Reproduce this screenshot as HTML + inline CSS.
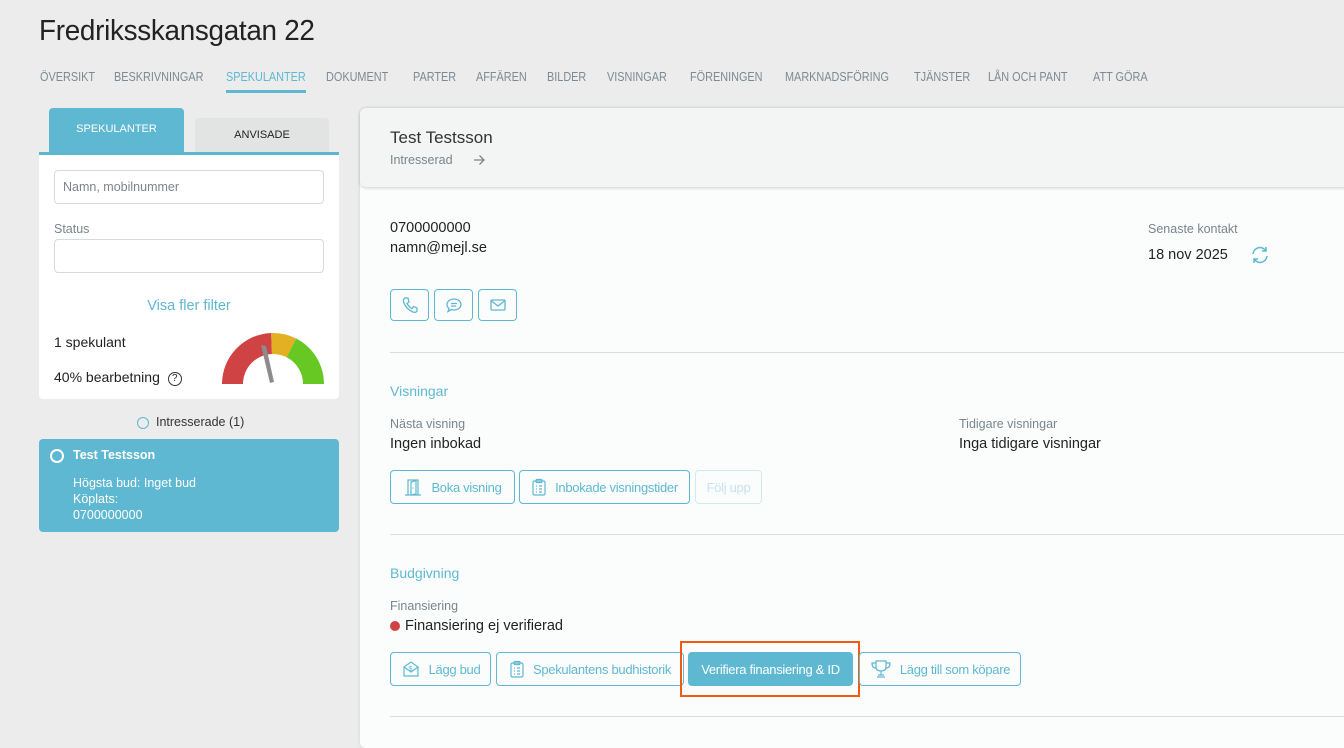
<!DOCTYPE html>
<html><head><meta charset="utf-8"><style>
*{margin:0;padding:0;box-sizing:border-box}
body{width:1344px;height:729px;overflow:hidden;background:#ececec;font-family:"Liberation Sans",sans-serif;position:relative;color:#222}
.a{position:absolute;white-space:nowrap}
.nav{top:70px;font-size:12.5px;color:#7d8a92;transform:scaleX(0.87);transform-origin:left top}
.btn{position:absolute;border:1px solid #5fb8d1;border-radius:4px;background:#fbfdfd;color:#5fb8d1;font-size:13px;display:flex;align-items:center;justify-content:center;gap:8px;letter-spacing:-0.3px}
.btn svg{flex:none}
.lbl{font-size:12.5px;color:#7a858c}
.val{font-size:14.5px;color:#222}
.hr{position:absolute;left:390px;right:0;height:1px;background:#dcdede}
</style></head><body>
<div class="a" style="left:39px;top:15px;font-size:29px;color:#222;letter-spacing:-0.3px;transform:scaleX(0.96);transform-origin:left top">Fredriksskansgatan 22</div>
<div class="a nav" style="left:40px">ÖVERSIKT</div>
<div class="a nav" style="left:114px">BESKRIVNINGAR</div>
<div class="a nav" style="left:226px;color:#5fb8d1">SPEKULANTER</div>
<div class="a" style="left:226px;top:90px;width:80px;height:3px;background:#5fb8d1"></div>
<div class="a nav" style="left:326px">DOKUMENT</div>
<div class="a nav" style="left:413px">PARTER</div>
<div class="a nav" style="left:476px">AFFÄREN</div>
<div class="a nav" style="left:547px">BILDER</div>
<div class="a nav" style="left:607px">VISNINGAR</div>
<div class="a nav" style="left:690px">FÖRENINGEN</div>
<div class="a nav" style="left:785px">MARKNADSFÖRING</div>
<div class="a nav" style="left:914px">TJÄNSTER</div>
<div class="a nav" style="left:988px">LÅN OCH PANT</div>
<div class="a nav" style="left:1093px">ATT GÖRA</div>

<!-- left panel -->
<div class="a" style="left:49px;top:108px;width:135px;height:46px;background:#5fb8d1;border-radius:4px 4px 0 0;color:#fff;font-size:11px;text-align:center;padding-top:15px">SPEKULANTER</div>
<div class="a" style="left:195px;top:118px;width:134px;height:36px;background:#e2e4e4;border-radius:4px 4px 0 0;color:#222;font-size:11px;text-align:center;padding-top:11px">ANVISADE</div>
<div class="a" style="left:39px;top:152px;width:300px;height:3px;background:#5fb8d1"></div>
<div class="a" style="left:39px;top:155px;width:300px;height:244px;background:#fff;border-radius:0 0 4px 4px"></div>
<div class="a" style="left:54px;top:170px;width:270px;height:34px;border:1px solid #d8dada;border-radius:4px;font-size:12.5px;color:#7a858c;padding:9px 8px">Namn, mobilnummer</div>
<div class="a lbl" style="left:54px;top:222px">Status</div>
<div class="a" style="left:54px;top:239px;width:270px;height:34px;border:1px solid #d8dada;border-radius:4px"></div>
<div class="a" style="left:39px;top:298px;width:300px;text-align:center;font-size:14.5px;color:#5fb8d1">Visa fler filter</div>
<div class="a val" style="left:54px;top:334px;font-size:14px">1 spekulant</div>
<div class="a val" style="left:54px;top:369px;font-size:14px">40% bearbetning <span style="display:inline-block;width:14px;height:14px;border:1.3px solid #333;border-radius:50%;font-size:10px;text-align:center;line-height:12px;margin-left:4px;vertical-align:1px">?</span></div>
<svg class="a" style="left:0;top:0" width="340" height="400">
<path d="M222,384 A51,51 0 0 1 271.2,333.05 L271.95,354.03 A30,30 0 0 0 243,384 Z" fill="#d04345"/>
<path d="M271.2,333.05 A51,51 0 0 1 296.15,338.56 L286.62,357.27 A30,30 0 0 0 271.95,354.03 Z" fill="#e2b022"/>
<path d="M296.15,338.56 A51,51 0 0 1 324,384 L303,384 A30,30 0 0 0 286.62,357.27 Z" fill="#68c823"/>
<path d="M261,345 L266,346 L274,382 L270,383 Z" fill="#8c8c8c"/>
</svg>
<div class="a" style="left:137px;top:417px;width:12px;height:12px;border:1.3px solid #5fb8d1;border-radius:50%"></div>
<div class="a" style="left:156px;top:415px;font-size:12.5px;color:#333">Intresserade (1)</div>
<div class="a" style="left:39px;top:439px;width:300px;height:93px;background:#5fb8d1;border-radius:4px;color:#fff;font-size:12.5px">
<div class="a" style="left:11px;top:10px;width:14px;height:14px;border:2px solid #fff;border-radius:50%"></div>
<div class="a" style="left:34px;top:9px;font-weight:bold">Test Testsson</div>
<div class="a" style="left:34px;top:36px;line-height:16px">Högsta bud: Inget bud<br>Köplats:<br>0700000000</div>
</div>

<!-- main -->
<div class="a" style="left:360px;top:108px;width:1000px;height:640px;background:#fbfdfd;border-radius:6px;box-shadow:0 0 3px rgba(0,0,0,.12)"></div>
<div class="a" style="left:360px;top:108px;width:1000px;height:79px;background:#f3f4f4;border-radius:6px 0 6px 6px;box-shadow:0 1px 3px rgba(0,0,0,.18)"></div>
<div class="a" style="left:390px;top:128px;font-size:17px;color:#333">Test Testsson</div>
<div class="a lbl" style="left:390px;top:153px">Intresserad</div>
<svg class="a" style="left:472px;top:153px" width="14" height="14"><path d="M2 7H12M7.5 2.5L12 7L7.5 11.5" stroke="#7a858c" stroke-width="1.3" fill="none"/></svg>
<div class="a val" style="left:390px;top:220px">0700000000</div>
<div class="a val" style="left:390px;top:240px">namn@mejl.se</div>
<div class="a lbl" style="left:1148px;top:222px">Senaste kontakt</div>
<div class="a val" style="left:1148px;top:247px">18 nov 2025</div>
<svg class="a" style="left:1250px;top:245px" width="20" height="20" fill="none" stroke="#5fb8d1" stroke-width="1.5"><path d="M3 9A7 7 0 0 1 16 6M16 2V6H12M17 11A7 7 0 0 1 4 14M4 18V14H8"/></svg>
<div class="btn" style="left:390px;top:289px;width:39px;height:32px"><svg width="18" height="18" fill="none" stroke="#5fb8d1" stroke-width="1.3"><path d="M4 2L7 2L8 6L6 7.5Q8 11 11 12.5L12.5 10.5L16 12L16 15Q15 17 12 16Q5 13 2.5 6Q2 3 4 2Z"/></svg></div>
<div class="btn" style="left:434px;top:289px;width:39px;height:32px"><svg width="18" height="18" fill="none" stroke="#5fb8d1" stroke-width="1.3"><path d="M9 3C13 3 16 5.5 16 8.5S13 14 9 14Q7.5 14 6.5 13.5L3 15.5L4 12.5Q2 11 2 8.5C2 5.5 5 3 9 3Z M6 7.5H12M6 10H11"/></svg></div>
<div class="btn" style="left:478px;top:289px;width:39px;height:32px"><svg width="18" height="18" fill="none" stroke="#5fb8d1" stroke-width="1.3"><rect x="2" y="4" width="14" height="10" rx="1"/><path d="M2 4.5L9 10L16 4.5"/></svg></div>
<div class="hr" style="top:352px"></div>
<div class="a" style="left:390px;top:383px;font-size:14px;color:#5fb8d1">Visningar</div>
<div class="a lbl" style="left:390px;top:417px">Nästa visning</div>
<div class="a val" style="left:390px;top:436px">Ingen inbokad</div>
<div class="a lbl" style="left:959px;top:417px">Tidigare visningar</div>
<div class="a val" style="left:959px;top:436px">Inga tidigare visningar</div>
<div class="btn" style="left:390px;top:470px;width:125px;height:34px"><svg width="20" height="20" fill="none" stroke="#5fb8d1" stroke-width="1.2"><path d="M2 18H18M5 18V3H15V18M8 18V5L13 3.5V17L8 18M10 10.5V11.5"/></svg>Boka visning</div>
<div class="btn" style="left:519px;top:470px;width:171px;height:34px"><svg width="16" height="18" fill="none" stroke="#5fb8d1" stroke-width="1.2"><rect x="2" y="3" width="12" height="14" rx="1.5"/><rect x="5" y="1.5" width="6" height="3" rx="1"/><path d="M5 8H6M8 8H11M5 11H6M8 11H11M5 14H6M8 14H11"/></svg>Inbokade visningstider</div>
<div class="btn" style="left:695px;top:470px;width:67px;height:34px;border-color:#cfe9f0;color:#c6e4ee">Följ upp</div>
<div class="hr" style="top:534px"></div>
<div class="a" style="left:390px;top:565px;font-size:14px;color:#5fb8d1">Budgivning</div>
<div class="a lbl" style="left:390px;top:599px">Finansiering</div>
<div class="a" style="left:390px;top:621px;width:10px;height:10px;border-radius:50%;background:#d04345"></div>
<div class="a val" style="left:405px;top:618px">Finansiering ej verifierad</div>
<div class="btn" style="left:390px;top:652px;width:101px;height:34px"><svg width="20" height="20" fill="none" stroke="#5fb8d1" stroke-width="1.2"><path d="M3 8L10 3L17 8V17H3Z M3 8L10 13L17 8"/><text x="7.5" y="12" font-size="7" fill="#5fb8d1" stroke="none" font-family="Liberation Sans">$</text></svg>Lägg bud</div>
<div class="btn" style="left:496px;top:652px;width:188px;height:34px"><svg width="16" height="18" fill="none" stroke="#5fb8d1" stroke-width="1.2"><rect x="2" y="3" width="12" height="14" rx="1.5"/><rect x="5" y="1.5" width="6" height="3" rx="1"/><path d="M5 8H6M8 8H11M5 11H6M8 11H11M5 14H6M8 14H11"/></svg>Spekulantens budhistorik</div>
<div class="btn" style="left:688px;top:652px;width:165px;height:34px;background:#5fb8d1;color:#fff">Verifiera finansiering &amp; ID</div>
<div class="a" style="left:680px;top:641px;width:180px;height:56px;border:2.5px solid #f25a14"></div>
<div class="btn" style="left:859px;top:652px;width:162px;height:34px"><svg width="22" height="20" fill="none" stroke="#5fb8d1" stroke-width="1.2"><path d="M6 2H16V8Q16 12 11 12Q6 12 6 8Z M6 4H2Q2 9 6 9M16 4H20Q20 9 16 9M11 12V16M7 18H15M8 16H14"/></svg>Lägg till som köpare</div>
<div class="hr" style="top:716px"></div>
</body></html>
